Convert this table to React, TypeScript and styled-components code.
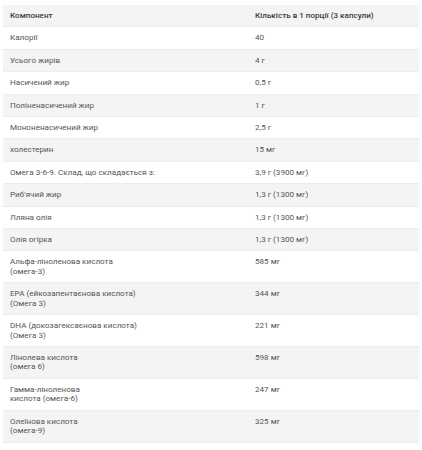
import React from 'react';
import styled, { createGlobalStyle } from 'styled-components';

const GlobalStyle = createGlobalStyle`
  html, body {
    margin: 0;
    padding: 0;
    background: #fff;
  }
  body {
    font-family: Roboto, "Noto Sans", sans-serif;
  }
`;

const Wrapper = styled.div`
  padding: 5px 3px 0 3px;
  width: 416px;
`;

const Table = styled.table`
  width: 100%;
  border-collapse: collapse;
  table-layout: fixed;
  font-size: 8.1px;
  line-height: 9.5px;
  color: #555;
`;

const Row = styled.tr<{ $shaded: boolean }>`
  background: ${(p) => (p.$shaded ? '#f4f4f4' : '#fff')};
  border-bottom: 1px solid #ececec;
`;

const HeadCell = styled.th`
  text-align: left;
  font-weight: 500;
  color: #3a3a3a;
  padding: 6px 7px 5.9px 7px;
  vertical-align: top;
`;

const Cell = styled.td`
  padding: 6px 7px 5.9px 7px;
  vertical-align: top;
`;

const rows: [React.ReactNode, string][] = [
  ['Калорії', '40'],
  ['Усього жирів', '4 г'],
  ['Насичений жир', '0,5 г'],
  ['Поліненасичений жир', '1 г'],
  ['Мононенасичений жир', '2,5 г'],
  ['холестерин', '15 мг'],
  ['Омега 3-6-9. Склад, що складається з:', '3,9 г (3900 мг)'],
  ['Риб\'ячий жир', '1,3 г (1300 мг)'],
  ['Лляна олія', '1,3 г (1300 мг)'],
  ['Олія огірка', '1,3 г (1300 мг)'],
  [<>Альфа-ліноленова кислота<br />(омега-3)</>, '585 мг'],
  [<>EPA (ейкозапентаєнова кислота)<br />(Омега 3)</>, '344 мг'],
  [<>DHA (докозагексаєнова кислота)<br />(Омега 3)</>, '221 мг'],
  [<>Лінолева кислота<br />(омега 6)</>, '598 мг'],
  [<>Гамма-ліноленова<br />кислота (омега-6)</>, '247 мг'],
  [<>Олеїнова кислота<br />(омега-9)</>, '325 мг'],
];

const App: React.FC = () => (
  <Wrapper>
    <GlobalStyle />
    <Table>
      <colgroup>
        <col style={{ width: 245 }} />
        <col />
      </colgroup>
      <thead>
        <Row $shaded>
          <HeadCell>Компонент</HeadCell>
          <HeadCell>Кількість в 1 порції (3 капсули)</HeadCell>
        </Row>
      </thead>
      <tbody>
        {rows.map(([name, amount], i) => (
          <Row key={i} $shaded={i % 2 === 1}>
            <Cell>{name}</Cell>
            <Cell>{amount}</Cell>
          </Row>
        ))}
      </tbody>
    </Table>
  </Wrapper>
);

export default App;
